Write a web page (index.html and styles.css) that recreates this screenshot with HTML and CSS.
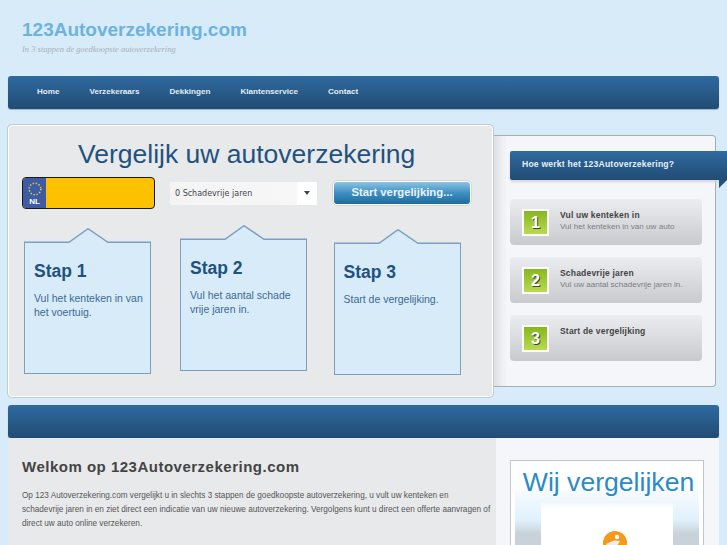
FILE: index.html
```html
<html>
<head>
    <meta name="viewport" content="width=727">
    <title>123Autoverzekering.com</title>
    <link rel="stylesheet" href="styles.css">
</head>
<body>
    <article id="container">
        <header id="logo">
            <h1>123Autoverzekering.com</h1>
            <p>In 3 stappen de goedkoopste autoverzekering</p>
        </header>
        <nav class="bar menu">
            <a href="#">Home</a>
            <a href="#">Verzekeraars</a>
            <a href="#">Dekkingen</a>
            <a href="#">Klantenservice</a>
            <a href="#">Contact</a>
        </nav>
        <section class="top">
            <section class="hero">
                <h2>Vergelijk uw autoverzekering</h2>
                <form class="search">
                    <div class="plate">
                        <div class="plate-eu">
                            <svg width="16" height="16" viewBox="0 0 16 16">
                                <circle cx="8" cy="8" r="5.8" fill="none" stroke="#e2d83a" stroke-width="1.5" stroke-dasharray="1.3 1.74"/>
                            </svg>
                            <span>NL</span>
                        </div>
                    </div>
                    <div class="select">
                        <span>0 Schadevrije jaren</span>
                        <i></i>
                    </div>
                    <div class="go"><span>Start vergelijking...</span></div>
                </form>
                <div class="cards">
                    <div class="card">
                        <svg class="tent" width="127" height="15" viewBox="0 0 127 15">
                            <path d="M.75 15V14.25H45L64 .75L84 14.25H126.25V15" fill="#d7ebf8" stroke="#7d9fbf" stroke-width="1.5"/>
                        </svg>
                        <div class="card-body">
                            <h3>Stap 1</h3>
                            <p>Vul het kenteken in van het voertuig.</p>
                        </div>
                    </div>
                    <div class="card second">
                        <svg class="tent" width="127" height="15" viewBox="0 0 127 15">
                            <path d="M.75 15V14.25H45L64 .75L84 14.25H126.25V15" fill="#d7ebf8" stroke="#7d9fbf" stroke-width="1.5"/>
                        </svg>
                        <div class="card-body">
                            <h3>Stap 2</h3>
                            <p>Vul het aantal schade vrije jaren in.</p>
                        </div>
                    </div>
                    <div class="card">
                        <svg class="tent" width="127" height="15" viewBox="0 0 127 15">
                            <path d="M.75 15V14.25H45L64 .75L84 14.25H126.25V15" fill="#d7ebf8" stroke="#7d9fbf" stroke-width="1.5"/>
                        </svg>
                        <div class="card-body">
                            <h3>Stap 3</h3>
                            <p>Start de vergelijking.</p>
                        </div>
                    </div>
                </div>
            </section>
            <aside class="side">
                <h2 class="ribbon">Hoe werkt het 123Autoverzekering?</h2>
                <div class="step">
                    <b class="num">1</b>
                    <div>
                        <h4>Vul uw kenteken in</h4>
                        <p>Vul het kenteken in van uw auto</p>
                    </div>
                </div>
                <div class="step">
                    <b class="num">2</b>
                    <div>
                        <h4>Schadevrije jaren</h4>
                        <p>Vul uw aantal schadevrije jaren in.</p>
                    </div>
                </div>
                <div class="step">
                    <b class="num">3</b>
                    <div>
                        <h4>Start de vergelijking</h4>
                    </div>
                </div>
            </aside>
        </section>
        <div class="bar band"></div>
        <section class="bottom">
            <article class="welcome">
                <h2>Welkom op 123Autoverzekering.com</h2>
                <p>Op 123 Autoverzekering.com vergelijkt u in slechts 3 stappen de goedkoopste autoverzekering, u vult uw kenteken en<br>schadevrije jaren in en ziet direct een indicatie van uw nieuwe autoverzekering. Vergolgens kunt u direct een offerte aanvragen of direct uw auto online verzekeren.</p>
            </article>
            <aside class="compare">
                <div class="compare-box">
                    <h2>Wij vergelijken</h2>
                    <div class="compare-fade">
                        <div class="compare-inner">
                            <svg width="24" height="24" viewBox="0 0 24 24">
                                <circle cx="12" cy="12" r="12" fill="#f39a1c"/>
                                <circle cx="14" cy="6" r="2.2" fill="#fff"/>
                                <path d="M3 13l8-3.500 6 .5-3 5 3 6h-4l-3-5-3 1z" fill="#e8eef2"/>
                            </svg>
                        </div>
                    </div>
                </div>
            </aside>
        </section>
    </article>
</body>
</html>
```

FILE: styles.css
```css
html, body {
    margin: 0;
    height: 545px;
    overflow: hidden;
}
body {
    background-color: #d7ebf8;
    font-family: 'Liberation Sans', Arial, sans-serif;
}
h1, h2, h3, h4, p {
    margin: 0;
    font-weight: normal;
}
#container {
    width: 711px;
    margin-left: 8px;
}

#logo {
    height: 76px;
    padding-left: 14px;
    box-sizing: border-box;
}
#logo h1 {
    padding-top: 19px;
    font-size: 19px;
    line-height: 22px;
    font-weight: bold;
    color: #6db3de;
}
#logo p {
    margin-top: 2px;
    font-family: 'Liberation Serif', serif;
    font-style: italic;
    font-size: 8.5px;
    line-height: 12px;
    color: #a9b1b8;
}

.bar {
    background: linear-gradient(#2f6a9f, #214c74);
    border-radius: 3px;
    box-shadow: 0 1px 1px #9db4c8;
}
.menu {
    display: flex;
    gap: 30px;
    height: 33px;
    box-sizing: border-box;
    padding: 0 0 2px 29px;
    align-items: center;
}
.menu a {
    color: #e3edf5;
    font-size: 8.1px;
    font-weight: bold;
    text-decoration: none;
}

.top {
    display: flex;
    align-items: flex-start;
    height: 281px;
    margin-top: 15px;
}
.hero {
    width: 485px;
    height: 272px;
    flex: none;
    margin-top: 1px;
    box-sizing: border-box;
    padding: 14px 13px 0;
    background-color: #e8e9eb;
    border: 1px solid #fff;
    border-radius: 4px;
    box-shadow: 0 0 0 1px #c3ccd4;
    position: relative;
    z-index: 1;
}
.hero > h2 {
    margin-left: 56px;
    font-size: 26.5px;
    line-height: 28px;
    color: #1f5280;
    white-space: nowrap;
}
.search {
    display: flex;
    align-items: center;
    margin-top: 9px;
}
.plate {
    width: 133px;
    height: 32px;
    flex: none;
    box-sizing: border-box;
    border: 1px solid #1a1a1a;
    border-radius: 4px;
    background-color: #fcc200;
    overflow: hidden;
}
.plate-eu {
    display: flex;
    flex-direction: column;
    align-items: center;
    width: 23px;
    height: 100%;
    padding-top: 3px;
    box-sizing: border-box;
    background-color: #3f5ca3;
    color: #fff;
    font-size: 8px;
    font-weight: bold;
}
.plate-eu svg {
    display: block;
}
.plate-eu span {
    line-height: 9px;
}
.select {
    display: flex;
    align-items: center;
    width: 147px;
    height: 23px;
    flex: none;
    margin-left: 15px;
    box-sizing: border-box;
    padding-left: 5px;
    background: linear-gradient(90deg, #f4f4f5 0, #f7f7f7 127px, #fff 127px);
    font-family: 'DejaVu Sans', sans-serif;
    font-size: 8px;
    color: #444;
}
.select span {
    flex: 1;
}
.select i {
    width: 0;
    height: 0;
    margin-right: 7px;
    border: 3.5px solid transparent;
    border-top: 4px solid #444;
    border-bottom: 0;
}
.go {
    width: 140px;
    height: 26px;
    flex: none;
    margin-left: 15px;
    box-sizing: border-box;
    padding: 1px;
    background-color: #fff;
    border: 1px solid #d3d6da;
    border-radius: 5px;
}
.go span {
    display: block;
    height: 100%;
    border-radius: 3px;
    background: linear-gradient(#8cc4e4, #3d8fc0 50%, #1e6b9e);
    color: #e9f3f9;
    font-size: 11.3px;
    font-weight: bold;
    line-height: 21px;
    text-align: center;
}

.cards {
    display: flex;
    gap: 29px;
    margin: 19px 0 0 2px;
}
.card {
    width: 127px;
    flex: none;
}
.card.second {
    margin-top: -3px;
}
.card:last-child {
    margin-left: -2.5px;
    margin-top: .5px;
}
.tent {
    display: block;
}
.card-body {
    height: 131px;
    box-sizing: border-box;
    padding: 16px 4px 0 9px;
    background-color: #d7ebf8;
    border: 1.5px solid #7d9fbf;
    border-top: 0;
}
.card-body h3 {
    font-size: 17.5px;
    line-height: 24px;
    font-weight: bold;
    color: #1f5280;
}
.card-body p {
    margin-top: 8px;
    font-size: 10.5px;
    line-height: 14px;
    color: #3d6a93;
}

.side {
    flex: none;
    width: 223px;
    height: 252px;
    margin-top: 11px;
    box-sizing: border-box;
    padding: 15px 13px 0 17px;
    background: linear-gradient(90deg, #dcdee1, #f5f6fa 14px);
    border: 1px solid #a9adb2;
    border-left: 0;
    border-radius: 0 4px 4px 0;
}
.ribbon {
    position: relative;
    height: 29px;
    margin-right: -25px;
    padding-left: 12px;
    background: linear-gradient(#2f6a9f, #214c74);
    border-radius: 2px 0 0 2px;
    box-shadow: 0 2px 3px #d3d6dc;
    color: #e6eff6;
    font-size: 8.6px;
    font-weight: bold;
    line-height: 27px;
    letter-spacing: .2px;
}
.ribbon::after {
    content: '';
    position: absolute;
    right: 0;
    top: 29px;
    border-top: 8px solid #24527b;
    border-left: 8px solid transparent;
    transform: scaleX(-1);
}
.step {
    display: flex;
    height: 46px;
    margin-top: 12px;
    box-sizing: border-box;
    padding: 10px 0 0 12px;
    background: linear-gradient(#ecedf0, #c9cacd);
    border-radius: 4px;
}
.ribbon + .step {
    margin-top: 19px;
}
.num {
    width: 27px;
    height: 27px;
    box-sizing: border-box;
    border: 2px solid #fff;
    background: linear-gradient(#86b71e, #b9db4f);
    color: #fff;
    font-size: 16px;
    line-height: 23px;
    text-align: center;
    text-shadow: 1px 1px 0 #444;
}
.step div {
    margin-left: 11px;
}
.step h4 {
    font-size: 8.5px;
    font-weight: bold;
    line-height: 12px;
    letter-spacing: .2px;
    color: #444;
}
.step p {
    font-size: 8.1px;
    line-height: 11px;
    color: #7d7e82;
}

.band {
    height: 33px;
}
.bottom {
    display: flex;
    height: 107px;
    overflow: hidden;
}
.welcome {
    width: 488px;
    flex: none;
    box-sizing: border-box;
    padding: 20px 0 0 14px;
    background-color: #e8e9eb;
}
.welcome h2 {
    font-size: 15px;
    font-weight: bold;
    line-height: 18px;
    letter-spacing: .5px;
    color: #444;
}
.welcome p {
    margin-top: 13px;
    font-size: 8.2px;
    line-height: 14px;
    color: #555;
}
.compare {
    flex: 1;
    padding: 22px 15px 0 14px;
    background-color: #f5f6fa;
}
.compare-box {
    height: 120px;
    padding: 0 4px;
    background-color: #fff;
    border: 1px solid #c3c5c8;
}
.compare-box h2 {
    height: 29px;
    padding-left: 3px;
    font-size: 26.6px;
    line-height: 42px;
    text-align: center;
    color: #2a8bc8;
}
.compare-fade {
    height: 90px;
    box-sizing: border-box;
    padding-top: 13px;
    background: linear-gradient(#f8fbff, #e0f1fc 30px, #c8d2d8 44px);
}
.compare-inner {
    width: 132px;
    height: 77px;
    margin: 0 auto;
    padding: 28px 0 0 16px;
    box-sizing: border-box;
    background: linear-gradient(#f3f9fe, #fff 7px);
    text-align: center;
}
```
